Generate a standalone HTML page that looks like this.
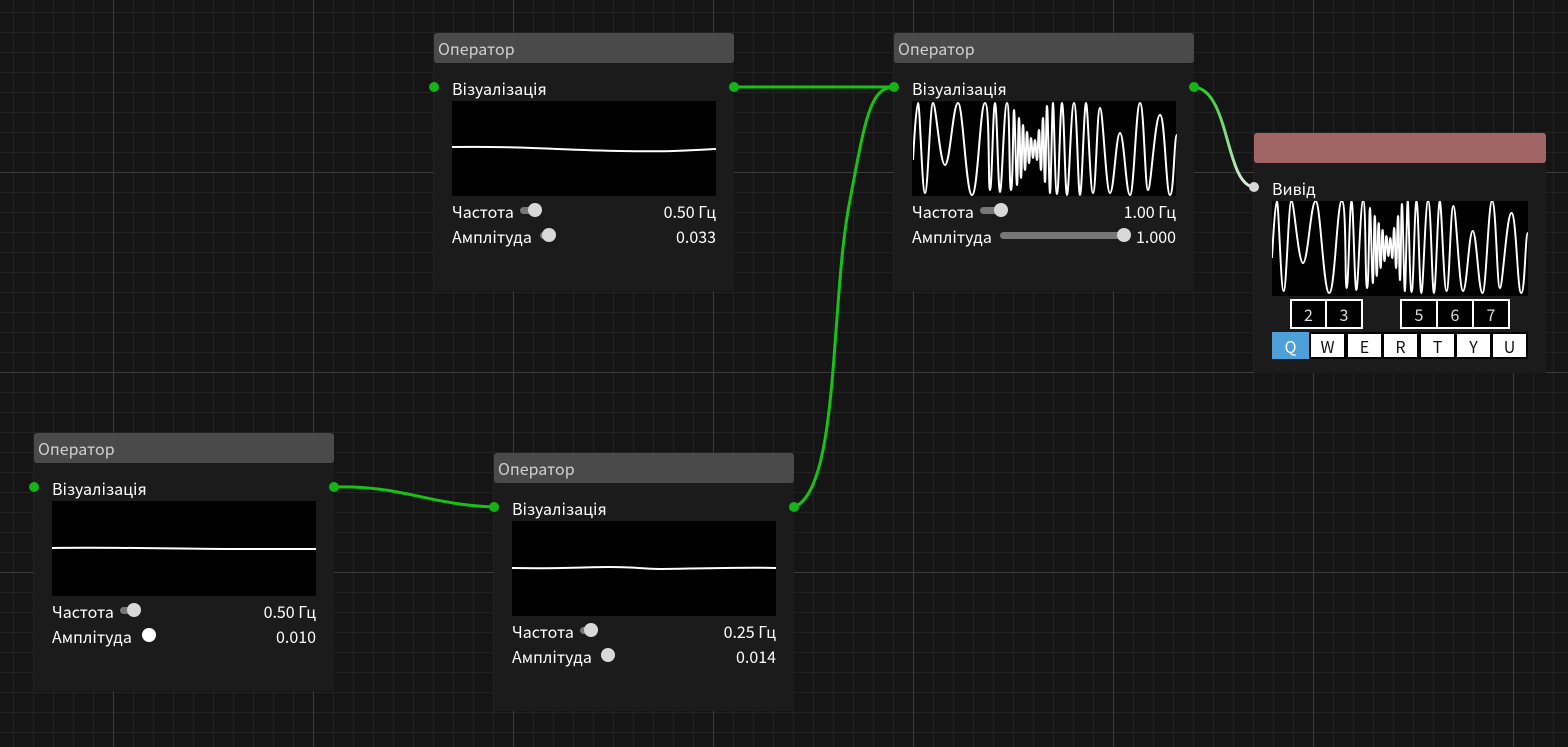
<!DOCTYPE html>
<html><head><meta charset="utf-8"><style>
*{margin:0;padding:0;box-sizing:border-box}
body{width:1568px;height:747px;overflow:hidden;position:relative;background-color:#151515;
background-image:
linear-gradient(to right,#3a3a3a 1px,transparent 1px),
linear-gradient(to bottom,#3a3a3a 1px,transparent 1px),
linear-gradient(to right,#222 1px,transparent 1px),
linear-gradient(to bottom,#222 1px,transparent 1px);
background-size:200px 200px,200px 200px,20px 20px,20px 20px;
background-position:113px 0,0 172px,13px 0,0 12px;
font-family:"Noto Sans CJK JP","DejaVu Sans",sans-serif;font-size:16px;line-height:20px;color:#fff}
.node{position:absolute;background:#1b1b1b}
.hdr{position:absolute;left:0;top:0;right:0;height:30px;background:#4a4a4a;border-radius:3px;color:#d0d0d0;padding:5px 4px;font-size:16px}
.t{position:absolute;white-space:nowrap}
.cv{position:absolute;background:#000}
.r{text-align:right}
.trk{position:absolute;height:7px;background:#777;border-radius:4px}
.knob{position:absolute;width:14px;height:14px;border-radius:7px;background:#d8d8d8}
.key{position:absolute;text-align:center;font-size:16px}
.num{background:#000;border:2px solid #fff;color:#ddd;height:30px;padding-top:3px}
.let{background:#fff;border:2px solid #000;color:#111;height:27px;padding-top:2px}
</style></head><body>

<div class="node" style="left:434px;top:33px;width:300px;height:258px">
 <div class="hdr">Оператор</div>
 <div class="t" style="left:18px;top:45px">Візуалізація</div>
 <div class="cv" style="left:18px;top:68px;width:264px;height:95px"></div>
 <div class="t" style="left:18px;top:168px">Частота</div>
 <div class="trk" style="left:86px;top:174px;width:16px"></div><div class="knob" style="left:94px;top:170px"></div>
 <div class="t r" style="right:18px;top:168px">0.50 Гц</div>
 <div class="t" style="left:18px;top:193px">Амплітуда</div>
 <div class="trk" style="left:106px;top:199px;width:10px"></div><div class="knob" style="left:108px;top:195px"></div>
 <div class="t r" style="right:18px;top:193px">0.033</div>
</div>

<div class="node" style="left:894px;top:33px;width:300px;height:258px">
 <div class="hdr">Оператор</div>
 <div class="t" style="left:18px;top:45px">Візуалізація</div>
 <div class="cv" style="left:18px;top:68px;width:264px;height:95px"></div>
 <div class="t" style="left:18px;top:168px">Частота</div>
 <div class="trk" style="left:86px;top:174px;width:24px"></div><div class="knob" style="left:100px;top:170px"></div>
 <div class="t r" style="right:18px;top:168px">1.00 Гц</div>
 <div class="t" style="left:18px;top:193px">Амплітуда</div>
 <div class="trk" style="left:106px;top:199px;width:128px"></div><div class="knob" style="left:223px;top:195px"></div>
 <div class="t r" style="right:18px;top:193px">1.000</div>
</div>

<div class="node" style="left:34px;top:433px;width:300px;height:258px">
 <div class="hdr">Оператор</div>
 <div class="t" style="left:18px;top:45px">Візуалізація</div>
 <div class="cv" style="left:18px;top:68px;width:264px;height:95px"></div>
 <div class="t" style="left:18px;top:168px">Частота</div>
 <div class="trk" style="left:86px;top:174px;width:14px"></div><div class="knob" style="left:93px;top:170px"></div>
 <div class="t r" style="right:18px;top:168px">0.50 Гц</div>
 <div class="t" style="left:18px;top:193px">Амплітуда</div>
 <div class="knob" style="left:108px;top:195px;background:#fff"></div>
 <div class="t r" style="right:18px;top:193px">0.010</div>
</div>

<div class="node" style="left:494px;top:453px;width:300px;height:258px">
 <div class="hdr">Оператор</div>
 <div class="t" style="left:18px;top:45px">Візуалізація</div>
 <div class="cv" style="left:18px;top:68px;width:264px;height:95px"></div>
 <div class="t" style="left:18px;top:168px">Частота</div>
 <div class="trk" style="left:86px;top:174px;width:12px"></div><div class="knob" style="left:90px;top:170px"></div>
 <div class="t r" style="right:18px;top:168px">0.25 Гц</div>
 <div class="t" style="left:18px;top:193px">Амплітуда</div>
 <div class="knob" style="left:107px;top:195px"></div>
 <div class="t r" style="right:18px;top:193px">0.014</div>
</div>

<div class="node" style="left:1254px;top:133px;width:292px;height:240px">
 <div class="hdr" style="background:#a26565"></div>
 <div class="t" style="left:18px;top:45px">Вивід</div>
 <div class="cv" style="left:18px;top:68px;width:256px;height:95px"></div>
 <div class="key num" style="left:36px;top:166px;width:37px">2</div>
 <div class="key num" style="left:71px;top:166px;width:38px">3</div>
 <div class="key num" style="left:146px;top:166px;width:38px">5</div>
 <div class="key num" style="left:182px;top:166px;width:38px">6</div>
 <div class="key num" style="left:218px;top:166px;width:38px">7</div>
 <div class="key let" style="left:18px;top:199px;width:37px;background:#4ea0da;color:#fff;border-color:#4ea0da">Q</div>
 <div class="key let" style="left:55px;top:199px;width:37px">W</div>
 <div class="key let" style="left:92px;top:199px;width:37px">E</div>
 <div class="key let" style="left:128px;top:199px;width:37px">R</div>
 <div class="key let" style="left:165px;top:199px;width:37px">T</div>
 <div class="key let" style="left:201px;top:199px;width:37px">Y</div>
 <div class="key let" style="left:237px;top:199px;width:37px">U</div>
</div>

<svg width="1568" height="747" style="position:absolute;left:0;top:0" xmlns="http://www.w3.org/2000/svg">
<defs>
<linearGradient id="g" x1="0" y1="0" x2="1" y2="1"><stop offset="0" stop-color="#1bc41b"/><stop offset="1" stop-color="#e8f0e8"/></linearGradient>
<clipPath id="c1"><rect x="913" y="101" width="264" height="95"/></clipPath>
<clipPath id="c2"><rect x="1272" y="201" width="256" height="95"/></clipPath>
<path id="wave" d="M913,160 S916,103 918,103 S922,193 925,193 S930,103 933,103 S940,165 945,165 S953,103 958,103 S966,195 972,195 S980,103 985,103 S988,190 990,190 S993,103 995,103 S998,192 1000,192 S1004,103 1007,103 S1009,190 1011,190 S1013,110 1014,110 S1016,185 1017,185 S1018,118 1019,118 S1020,178 1021,178 S1022,125 1023,125 S1024,170 1025,170 S1026,132 1027,132 S1028,163 1029,163 S1030,138 1031,138 S1032,158 1033,158 S1034,140 1035,140 S1036,160 1037,160 S1038,130 1039,130 S1040,170 1041,170 S1042,118 1043,118 S1044,182 1045,182 S1046,106 1047,106 S1049,193 1050,193 S1052,103 1053,103 S1055,194 1057,194 S1060,103 1062,103 S1065,195 1067,195 S1071,103 1074,103 S1078,195 1080,195 S1084,103 1086,103 S1090,193 1093,193 S1097,108 1100,108 S1106,193 1110,193 S1116,133 1120,133 S1126,195 1130,195 S1136,103 1140,103 S1145,190 1148,190 S1155,115 1160,115 S1166,195 1170,195 S1174,135 1177,135"/>
</defs>
<g fill="none" stroke="#fff" stroke-width="2">
<path d="M452 147 C520 146 560 150 620 151 S690 150 716 149"/>
<path d="M52 548 C120 547 180 549 240 549 L316 549"/>
<path d="M512 568 C560 569 580 567 610 567 S640 569 660 569 S740 567 776 568"/>
</g>
<g clip-path="url(#c1)"><use href="#wave" fill="none" stroke="#fff" stroke-width="2"/></g>
<g clip-path="url(#c2)"><g transform="translate(1272,98) scale(0.9697,1) translate(-913,0)">
<use href="#wave" fill="none" stroke="#fff" stroke-width="2" vector-effect="non-scaling-stroke"/>
</g></g>
<g fill="none" stroke-width="3" stroke-linecap="round">
<path stroke="#17c217" d="M734 87 L894 87"/>
<path stroke="#17c217" d="M334 487 C400 485 430 505 494 507"/>
<path stroke="#17c217" d="M794 507 C840 490 830 300 850 200 C865 120 870 87 894 87"/>
<path stroke="url(#g)" d="M1194 87 C1230 90 1225 185 1254 187"/>
</g>
<g fill="#16b316">
<circle cx="434" cy="87" r="5"/><circle cx="734" cy="87" r="5"/>
<circle cx="894" cy="87" r="5"/><circle cx="1194" cy="87" r="5"/>
<circle cx="34" cy="487" r="5"/><circle cx="334" cy="487" r="5"/>
<circle cx="494" cy="507" r="5"/><circle cx="794" cy="507" r="5"/>
</g>
<circle cx="1254" cy="187" r="5" fill="#d8d8d8"/>
</svg>
</body></html>
